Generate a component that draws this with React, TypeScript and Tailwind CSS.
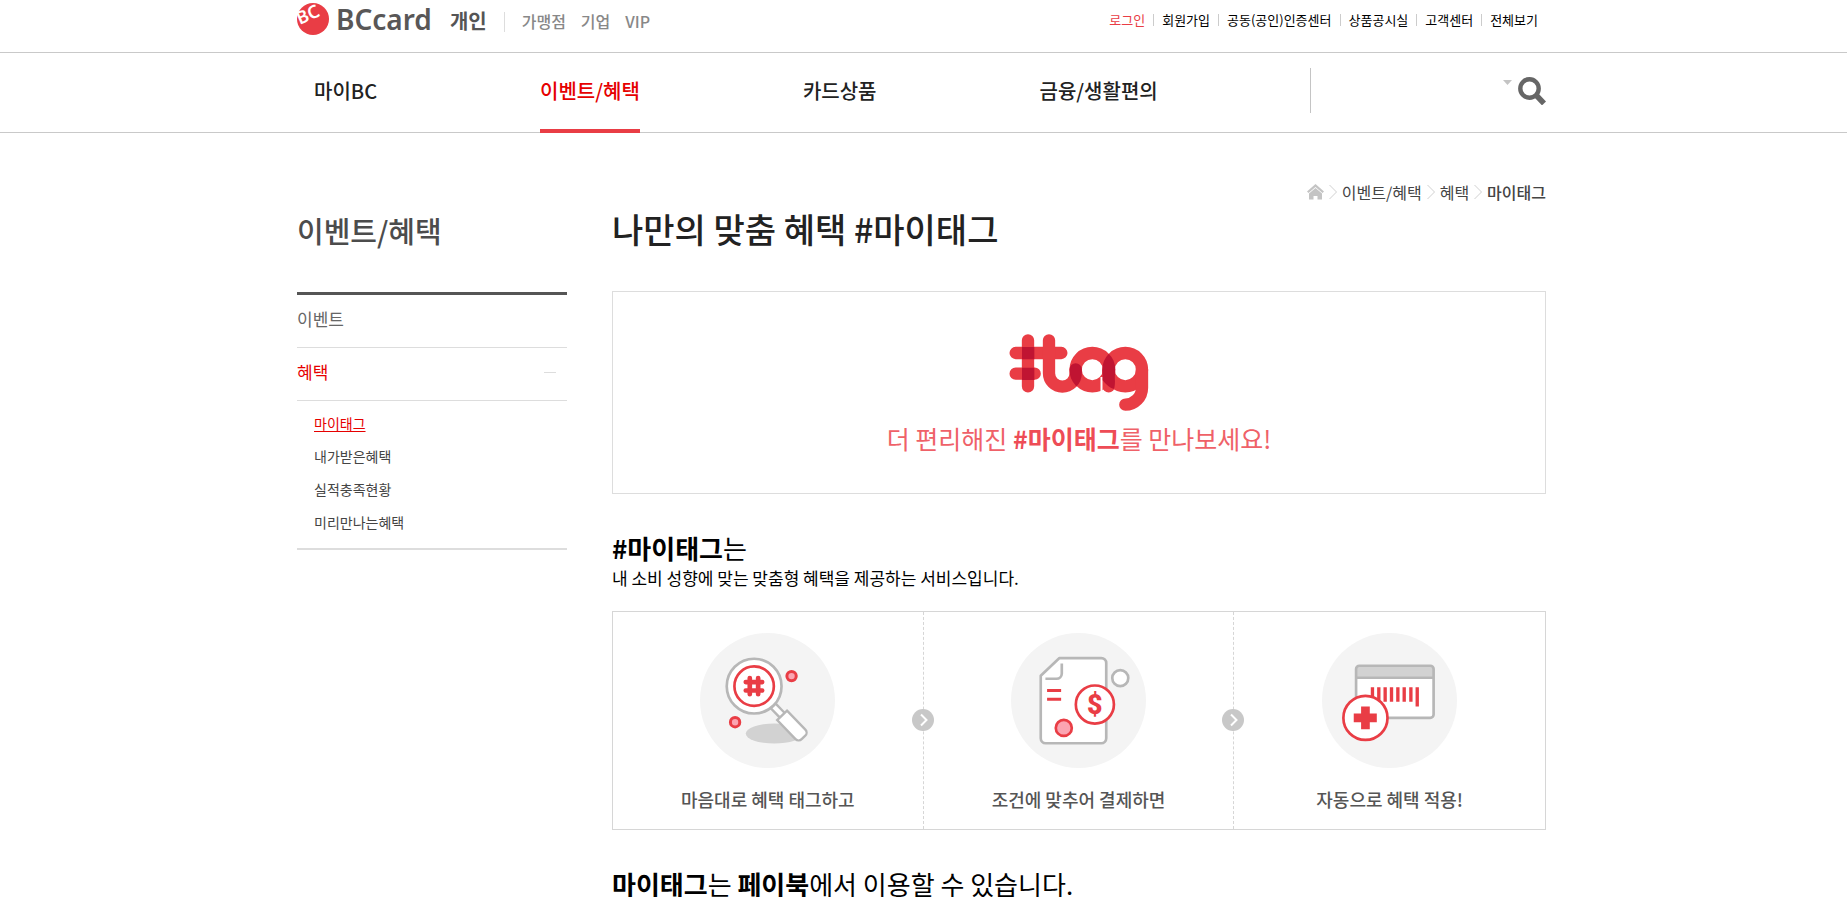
import type { ReactNode } from 'react';

const SITE_LINKS = ['가맹점', '기업', 'VIP'];

const UTIL_LINKS = [
  { label: '로그인', active: true },
  { label: '회원가입' },
  { label: '공동(공인)인증센터' },
  { label: '상품공시실' },
  { label: '고객센터' },
  { label: '전체보기' },
];

const NAV_LINKS = [
  { label: '마이BC' },
  { label: '이벤트/혜택', active: true },
  { label: '카드상품' },
  { label: '금융/생활편의' },
];

const SUB_LINKS = [
  { label: '마이태그', active: true },
  { label: '내가받은혜택' },
  { label: '실적충족현황' },
  { label: '미리만나는혜택' },
];

const STEPS = [
  { label: '마음대로 혜택 태그하고', Icon: SearchTagIcon },
  { label: '조건에 맞추어 결제하면', Icon: ReceiptIcon },
  { label: '자동으로 혜택 적용!', Icon: CardPlusIcon },
];

function Container({ className = '', children }: { className?: string; children: ReactNode }) {
  return <div className={`mx-auto w-full max-w-[1253px] pr-1 ${className}`}>{children}</div>;
}

function BcMark() {
  return (
    <svg viewBox="0 0 96 96" className="size-8 overflow-visible" aria-hidden="true">
      <circle cx="48" cy="48" r="48" fill="#e93d45" />
      <text
        x="0"
        y="0"
        transform="translate(8 66) rotate(-24)"
        fontFamily="'Noto Sans', sans-serif"
        fontSize="54"
        fontWeight="600"
        fill="#fff"
      >
        BC
      </text>
    </svg>
  );
}

function TagLogo() {
  return (
    <svg viewBox="416 68 423 237" className="h-[79px] w-[141px]" role="img" aria-label="#tag">
      <defs>
        <clipPath id="disc-a">
          <circle cx="666" cy="178" r="69" />
        </clipPath>
      </defs>
      <g fill="none" stroke="#e93d45" strokeWidth="37" strokeLinecap="round">
        <path d="M473 90V228M436 128H573M436 190H493" />
        <path d="M536 90V189a39 39 0 0 0 80 0V177" />
        <circle cx="666" cy="178" r="50" />
        <circle cx="765" cy="178" r="50" />
        <path d="M715 178V228" />
        <path d="M815 178V232a50 51 0 0 1 -50 51" />
      </g>
      <path d="M693.500 200V242" stroke="#fff" strokeWidth="6" />
      <g fill="#c01432">
        <path d="M455 110h37v37h-37zM455 172h37v37h-37z" />
        <circle cx="765" cy="178" r="69" clipPath="url(#disc-a)" />
        <path d="M697 178V210Q712 230 730 236Q735 232 733.500 200V178z" />
      </g>
      <path
        d="M576 228a39 39 0 0 0 40 -39V177"
        fill="none"
        stroke="#c01432"
        strokeWidth="37"
        strokeLinecap="round"
        clipPath="url(#disc-a)"
      />
    </svg>
  );
}

function SearchTagIcon() {
  return (
    <svg viewBox="301 85 404 404" className="size-[135px]" aria-hidden="true">
      <circle cx="503" cy="287" r="202" fill="#f4f4f4" />
      <ellipse cx="523" cy="386" rx="85" ry="30" fill="#d2d2d2" />
      <g transform="translate(463 244) rotate(46)" fill="#fff" stroke="#b7b7b7" strokeWidth="7">
        <rect x="82" y="-10" width="44" height="20" />
        <path d="M121 -20H200a13 13 0 0 1 13 13V8a13 13 0 0 1 -13 13H121z" />
      </g>
      <circle cx="463" cy="244" r="82" fill="#fff" stroke="#b7b7b7" strokeWidth="8" />
      <circle cx="463" cy="244" r="59" fill="none" stroke="#e93d45" strokeWidth="8" />
      <path
        d="M450 220V268M475 220V268M438 232H487M438 257H487"
        stroke="#e93d45"
        strokeWidth="14"
        strokeLinecap="round"
      />
      <g fill="#fba5b2" stroke="#e93d45" strokeWidth="9">
        <circle cx="575" cy="214" r="14" />
        <circle cx="406" cy="352" r="14" />
      </g>
    </svg>
  );
}

function ReceiptIcon() {
  return (
    <svg viewBox="335 85 404 404" className="size-[135px]" aria-hidden="true">
      <circle cx="537" cy="287" r="202" fill="#f4f4f4" />
      <g fill="#fff" stroke="#b7b7b7" strokeWidth="8" strokeLinejoin="round">
        <path d="M480 160H605a15 15 0 0 1 15 15V400a15 15 0 0 1 -15 15H439a15 15 0 0 1 -15 -15V213z" />
        <path d="M487 176V206a16 16 0 0 1 -16 16H438" fill="none" />
        <circle cx="662" cy="220" r="24" />
      </g>
      <path d="M443 257H485M443 283H485" stroke="#e93d45" strokeWidth="9" />
      <circle cx="493" cy="369" r="24" fill="#fba5b2" stroke="#e93d45" strokeWidth="8" />
      <circle cx="586" cy="299" r="57" fill="#fff" stroke="#e93d45" strokeWidth="8" />
      <text
        x="586"
        y="328"
        textAnchor="middle"
        fontFamily="Roboto, sans-serif"
        fontSize="80"
        fontWeight="900"
        fill="#e93d45"
      >
        $
      </text>
    </svg>
  );
}

function CardPlusIcon() {
  return (
    <svg viewBox="310 85 404 404" className="size-[135px]" aria-hidden="true">
      <circle cx="512" cy="287" r="202" fill="#f4f4f4" />
      <rect x="412" y="183" width="232" height="156" rx="10" fill="#fff" />
      <path d="M412 219V193a10 10 0 0 1 10 -10H634a10 10 0 0 1 10 10V219z" fill="#d2d2d2" />
      <path d="M412 219H644" stroke="#b7b7b7" strokeWidth="7" />
      <rect x="412" y="183" width="232" height="156" rx="10" fill="none" stroke="#b7b7b7" strokeWidth="8" />
      <path
        d="M461 247V291M480 247V291M499 247V291M518 247V291M537 247V291M556 247V291M576 247V291M595 247V305"
        stroke="#e93d45"
        strokeWidth="10"
      />
      <circle cx="440" cy="339" r="66" fill="#fff" stroke="#e93d45" strokeWidth="8" />
      <path d="M405 339H474M440 305V373" stroke="#e93d45" strokeWidth="26" />
    </svg>
  );
}

function StepArrow() {
  return (
    <svg
      viewBox="0 0 22 22"
      className="absolute top-[97px] right-0 size-[22px] translate-x-1/2"
      aria-hidden="true"
    >
      <circle cx="11" cy="11" r="11" fill="#c8c8c8" />
      <path d="M9 5.500L14.500 11L9 16.500" fill="none" stroke="#fff" strokeWidth="2" />
    </svg>
  );
}

function CrumbArrow() {
  return (
    <svg viewBox="0 0 8 16" className="mx-[5px] h-4 w-2" aria-hidden="true">
      <path d="M0.500 1L7.500 8L0.500 15" fill="none" stroke="#d0d0d0" />
    </svg>
  );
}

function Header() {
  return (
    <header>
      <div className="h-[52px]">
        <Container className="flex justify-between">
          <div className="flex h-[38px] items-center">
            <a href="#home" className="flex items-center gap-[7px]">
              <BcMark />
              <span className="font-['Noto_Sans'] text-[28px] leading-8 font-semibold text-[#595757]">BCcard</span>
            </a>
            <a href="#personal" className="ml-[18px] pt-1 text-[20px] leading-6 font-bold text-[#555]">
              개인
            </a>
            <span className="mt-[6px] ml-[17px] h-5 w-px bg-[#ddd]" />
            <div className="ml-[17px] flex gap-[15px] pt-1 text-[16px] leading-6 font-medium text-[#888]">
              {SITE_LINKS.map((label) => (
                <a key={label} href="#site">
                  {label}
                </a>
              ))}
            </div>
          </div>
          <ul className="flex h-10 items-center pr-2 text-[13px] leading-5 text-black">
            {UTIL_LINKS.map((link, i) => (
              <li key={link.label} className="flex items-center">
                {i > 0 && <span className="mx-2 h-3 w-px bg-[#ccc]" />}
                <a href="#util" className={link.active ? 'text-[#e93d45]' : ''}>
                  {link.label}
                </a>
              </li>
            ))}
          </ul>
        </Container>
      </div>
      <div className="h-[81px] border-y border-[#c9c9c9]">
        <Container className="flex justify-between">
          <nav className="flex gap-[163px] pl-[17px]">
            {NAV_LINKS.map((link) => (
              <a
                key={link.label}
                href="#menu"
                className={`h-20 pt-[22px] text-[20px] leading-8 font-medium ${
                  link.active ? 'border-b-4 border-[#e93d45] text-[#e60000]' : 'text-[#222]'
                }`}
              >
                {link.label}
              </a>
            ))}
          </nav>
          <form className="mt-[15px] flex h-[45px] w-[236px] border-l border-[#c4c4c4]">
            <input aria-label="검색어" className="min-w-0 flex-1 bg-transparent px-4 text-sm outline-none" />
            <button type="button" aria-label="검색어 목록" className="h-7 w-[10px]">
              <svg viewBox="0 0 9 5" className="h-[5px] w-[9px]" aria-hidden="true">
                <path d="M0 0H9L4.500 5z" fill="#c4c4c4" />
              </svg>
            </button>
            <button type="submit" aria-label="검색" className="mt-[9px] ml-[5px] h-7 w-7">
              <svg viewBox="0 0 28 28" className="size-7" aria-hidden="true">
                <circle cx="11.500" cy="11.500" r="9.200" fill="none" stroke="#666" strokeWidth="4.400" />
                <path d="M17.500 17.500L26 26.500" stroke="#666" strokeWidth="5.500" />
              </svg>
            </button>
          </form>
        </Container>
      </div>
    </header>
  );
}

function Sidebar() {
  return (
    <aside className="w-[270px] shrink-0">
      <h2 className="pt-[75px] text-[29px] leading-[44px] font-medium text-[#4c4c4c]">이벤트/혜택</h2>
      <ul className="mt-10 border-t-3 border-b-2 border-t-[#555] border-b-[#ddd] text-[17px] leading-6">
        <li className="border-b border-[#ddd] pt-3 pb-4 text-[#666]">
          <a href="#event">이벤트</a>
        </li>
        <li>
          <a
            href="#benefit"
            className="flex items-center justify-between border-b border-[#ddd] pt-3 pr-[11px] pb-4 text-[#e60000]"
          >
            혜택
            <span className="h-px w-3 bg-[#ddd]" />
          </a>
          <ul className="pt-[6px] pb-[9px] pl-[17px] text-[14px] leading-[33px] text-[#444]">
            {SUB_LINKS.map((link) => (
              <li key={link.label}>
                <a href="#sub" className={link.active ? 'text-[#e60000] underline underline-offset-2' : ''}>
                  {link.label}
                </a>
              </li>
            ))}
          </ul>
        </li>
      </ul>
    </aside>
  );
}

function Breadcrumb() {
  return (
    <nav
      aria-label="현재 위치"
      className="flex h-6 items-center justify-end text-[16px] leading-6 text-[#444]"
    >
      <a href="#home" aria-label="홈">
        <svg viewBox="0 0 17 16" className="h-4 w-[17px]" fill="#c4c4c4" aria-hidden="true">
          <path d="M8.500 0L17 7.500L15.500 9L8.500 3L1.500 9L0 7.500z" />
          <path d="M8.500 4L15 9.500V15.500H10.500V12H6.500V15.500H2V9.500z" />
        </svg>
      </a>
      <CrumbArrow />
      <a href="#event">이벤트/혜택</a>
      <CrumbArrow />
      <a href="#benefit">혜택</a>
      <CrumbArrow />
      <span className="font-medium">마이태그</span>
    </nav>
  );
}

export default function App() {
  return (
    <div className="overflow-hidden bg-white font-['Noto_Sans_CJK_KR','Noto_Sans_CJK_SC',sans-serif]">
      <Header />
      <Container className="flex gap-[45px]">
        <Sidebar />
        <main className="min-w-0 flex-1 pt-[47px]">
          <Breadcrumb />
          <h1 className="text-[34px] leading-[50px] font-medium text-[#222]">나만의 맞춤 혜택 #마이태그</h1>
          <section className="mt-[37px] flex h-[203px] flex-col items-center border border-[#ddd] pt-[41px]">
            <TagLogo />
            <p className="mt-[6px] text-[25px] leading-10 text-[#ef6168]">
              더 편리해진 <b className="font-bold text-[#ee4c56]">#마이태그</b>를 만나보세요!
            </p>
          </section>
          <h2 className="mt-9 text-[26px] leading-9 text-black">
            <b>#마이태그</b>는
          </h2>
          <p className="text-[17px] leading-6 text-black">내 소비 성향에 맞는 맞춤형 혜택을 제공하는 서비스입니다.</p>
          <ol className="mt-[21px] grid h-[219px] grid-cols-3 border border-[#d6d6d6]">
            {STEPS.map(({ label, Icon }, i) => (
              <li
                key={label}
                className={`relative flex flex-col items-center pt-[21px] ${
                  i < STEPS.length - 1 ? 'border-r border-dashed border-[#d6d6d6]' : ''
                }`}
              >
                <Icon />
                <p className="mt-[17px] text-[18px] leading-7 font-medium text-[#555]">{label}</p>
                {i < STEPS.length - 1 && <StepArrow />}
              </li>
            ))}
          </ol>
          <h2 className="mt-9 text-[26px] leading-9 text-black">
            <b>마이태그</b>는 <b>페이북</b>에서 이용할 수 있습니다.
          </h2>
        </main>
      </Container>
    </div>
  );
}
